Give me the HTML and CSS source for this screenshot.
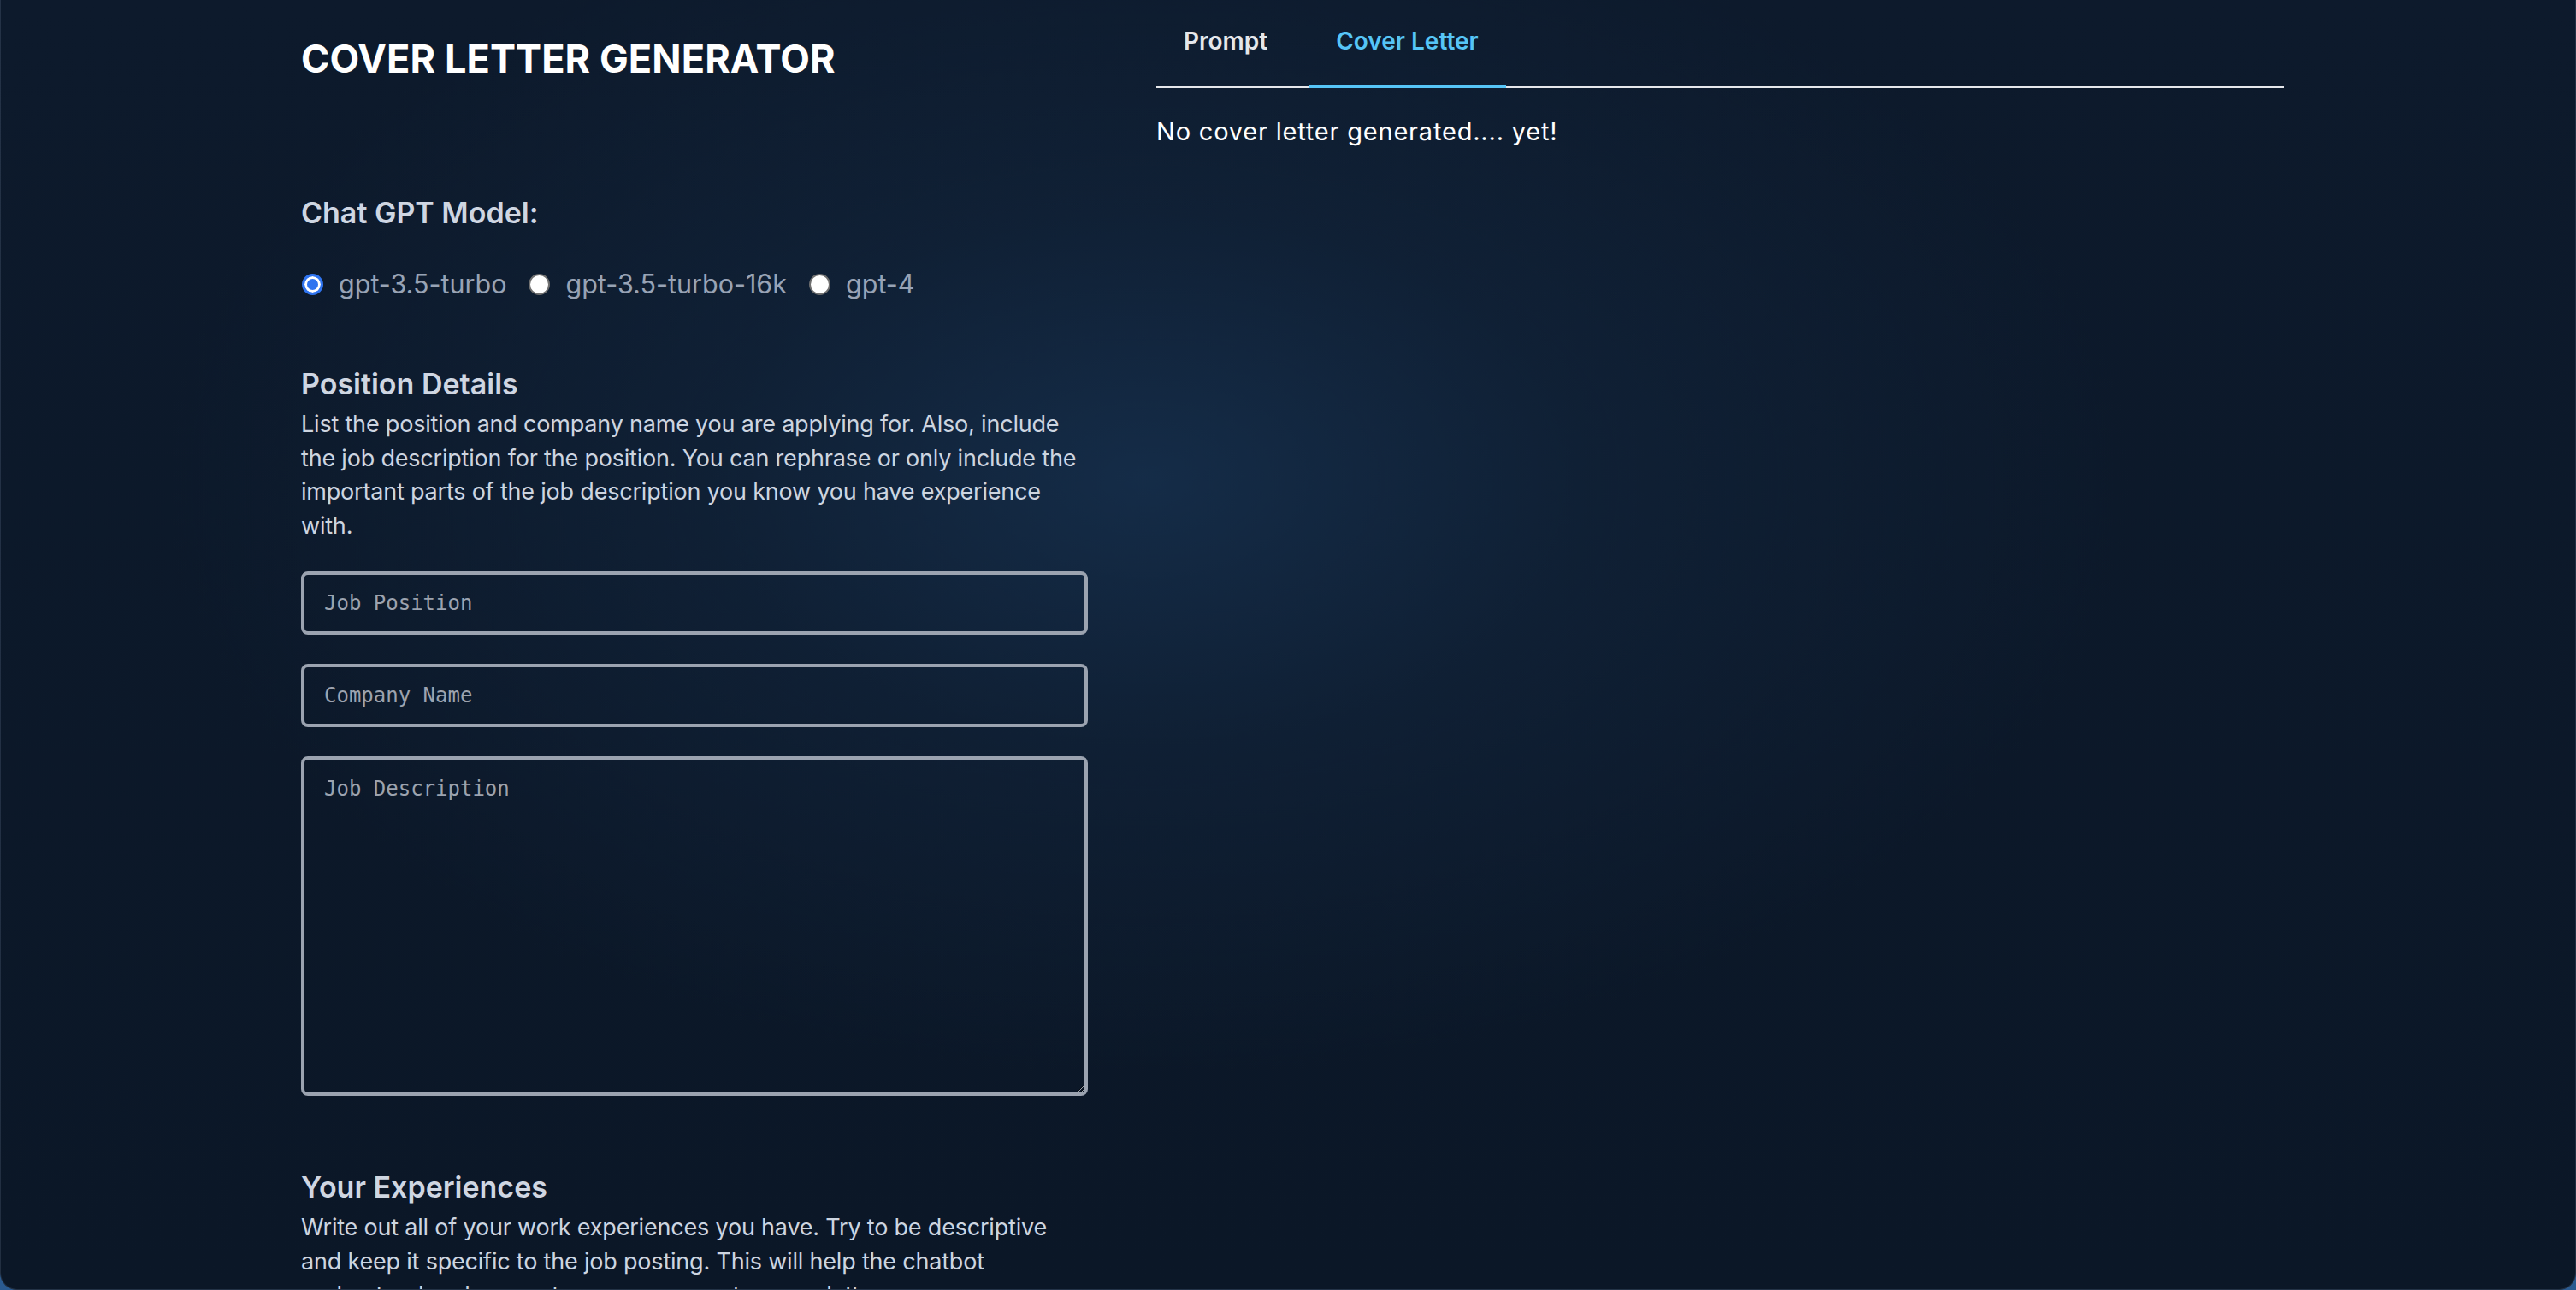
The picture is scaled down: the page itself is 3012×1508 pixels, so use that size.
FILE: index.html
```html
<!DOCTYPE html>
<html lang="en">
<head>
<meta charset="utf-8">
<title>Cover Letter Generator</title>
<link rel="stylesheet" href="styles.css">
</head>
<body>
<div class="window">
  <div class="app">
    <section class="left">
      <h1 class="title">COVER LETTER GENERATOR</h1>

      <div class="model">
        <h2 class="label">Chat GPT Model:</h2>
        <div class="radios">
          <label class="radio"><input type="radio" name="model" checked><span>gpt-3.5-turbo</span></label>
          <label class="radio"><input type="radio" name="model"><span>gpt-3.5-turbo-16k</span></label>
          <label class="radio"><input type="radio" name="model"><span>gpt-4</span></label>
        </div>
      </div>

      <div class="position">
        <h2 class="label">Position Details</h2>
        <p class="desc">List the position and company name you are applying for. Also, include the job description for the position. You can rephrase or only include the important parts of the job description you know you have experience with.</p>
        <input class="field" type="text" placeholder="Job Position">
        <input class="field" type="text" placeholder="Company Name">
        <textarea class="field area" placeholder="Job Description"></textarea>
      </div>

      <div class="experience">
        <h2 class="label">Your Experiences</h2>
        <p class="desc">Write out all of your work experiences you have. Try to be descriptive and keep it specific to the job posting. This will help the chatbot understand and generate a more accurate cover letter.</p>
      </div>
    </section>

    <section class="right">
      <nav class="tabs">
        <div class="tab">Prompt</div>
        <div class="tab active">Cover Letter</div>
      </nav>
      <p class="empty">No cover letter generated.... yet!</p>
    </section>
  </div>
</div>
</body>
</html>
```

FILE: styles.css
```css
html, body {
  margin: 0;
  padding: 0;
}

body {
  background: #2a5a90;
  font-family: Inter, "Noto Sans", "Liberation Sans", sans-serif;
  overflow: hidden;
}

.window {
  height: 1508px;
  box-sizing: border-box;
  overflow: hidden;
  border-radius: 0 0 20px 20px;
  border: 1px solid rgba(140, 160, 190, 0.18);
  border-top: none;
  background:
    radial-gradient(ellipse 1150px 700px at 1340px 560px, rgba(24, 52, 84, 0.7) 0%, rgba(20, 42, 68, 0.4) 45%, rgba(11, 23, 39, 0) 100%),
    linear-gradient(180deg, #0d1a2c 0%, #0b1727 100%);
}

.app {
  display: flex;
  align-items: flex-start;
  gap: 80px;
  padding-left: 351px;
}

.left {
  width: 920px;
  flex: none;
}

.right {
  width: 1318px;
  flex: none;
}

.title {
  margin: 42px 0 0;
  font-size: 45px;
  line-height: 54px;
  font-weight: 700;
  color: #ffffff;
  letter-spacing: 0.1px;
}

.label {
  margin: 0;
  font-size: 34px;
  line-height: 41px;
  font-weight: 600;
  color: #cfd6e2;
}

.model {
  margin-top: 132px;
}

.radios {
  margin-top: 43px;
  display: flex;
  align-items: center;
  height: 40px;
}

.radio {
  display: flex;
  align-items: center;
  margin-right: 25px;
  font-size: 30.5px;
  line-height: 40px;
  color: #98a3b5;
}

.radio input {
  appearance: none;
  -webkit-appearance: none;
  margin: 0 18px 0 1px;
  width: 25px;
  height: 25px;
  box-sizing: border-box;
  border-radius: 50%;
  border: 2px solid #6f6f6f;
  background: #ffffff;
}

.radio input:checked {
  border: 3px solid #2f74f0;
  background: #2f74f0;
  box-shadow: inset 0 0 0 3px #ffffff;
}

.position {
  margin-top: 76px;
}

.desc {
  margin: 7px 0 0;
  font-size: 27px;
  line-height: 39.5px;
  letter-spacing: -0.2px;
  color: #cdd5e0;
}

.field {
  display: block;
  width: 920px;
  height: 74px;
  box-sizing: border-box;
  margin: 34px 0 0;
  padding: 0 23px;
  background: transparent;
  border: 4px solid #9ba3b0;
  border-radius: 8px;
  font-family: "DejaVu Sans Mono", "Liberation Mono", monospace;
  font-size: 24px;
  color: #e5e7eb;
}

.field::placeholder {
  color: #9ca3af;
}

.area {
  height: 397px;
  padding: 20px 23px;
  resize: vertical;
  line-height: 28px;
}

.experience {
  margin-top: 86px;
}

.tabs {
  display: flex;
  gap: 16px;
  border-bottom: 2px solid #e5e7eb;
}

.tab {
  padding: 27px 32px 30px;
  margin-bottom: -2px;
  border-bottom: 4px solid transparent;
  font-size: 28px;
  line-height: 42px;
  font-weight: 600;
  color: #e5e7eb;
}

.tab.active {
  color: #56c5f7;
  border-bottom-color: #56c5f7;
}

.empty {
  margin: 30px 0 0;
  font-size: 29px;
  line-height: 42px;
  letter-spacing: 0.8px;
  color: #ffffff;
}
```
